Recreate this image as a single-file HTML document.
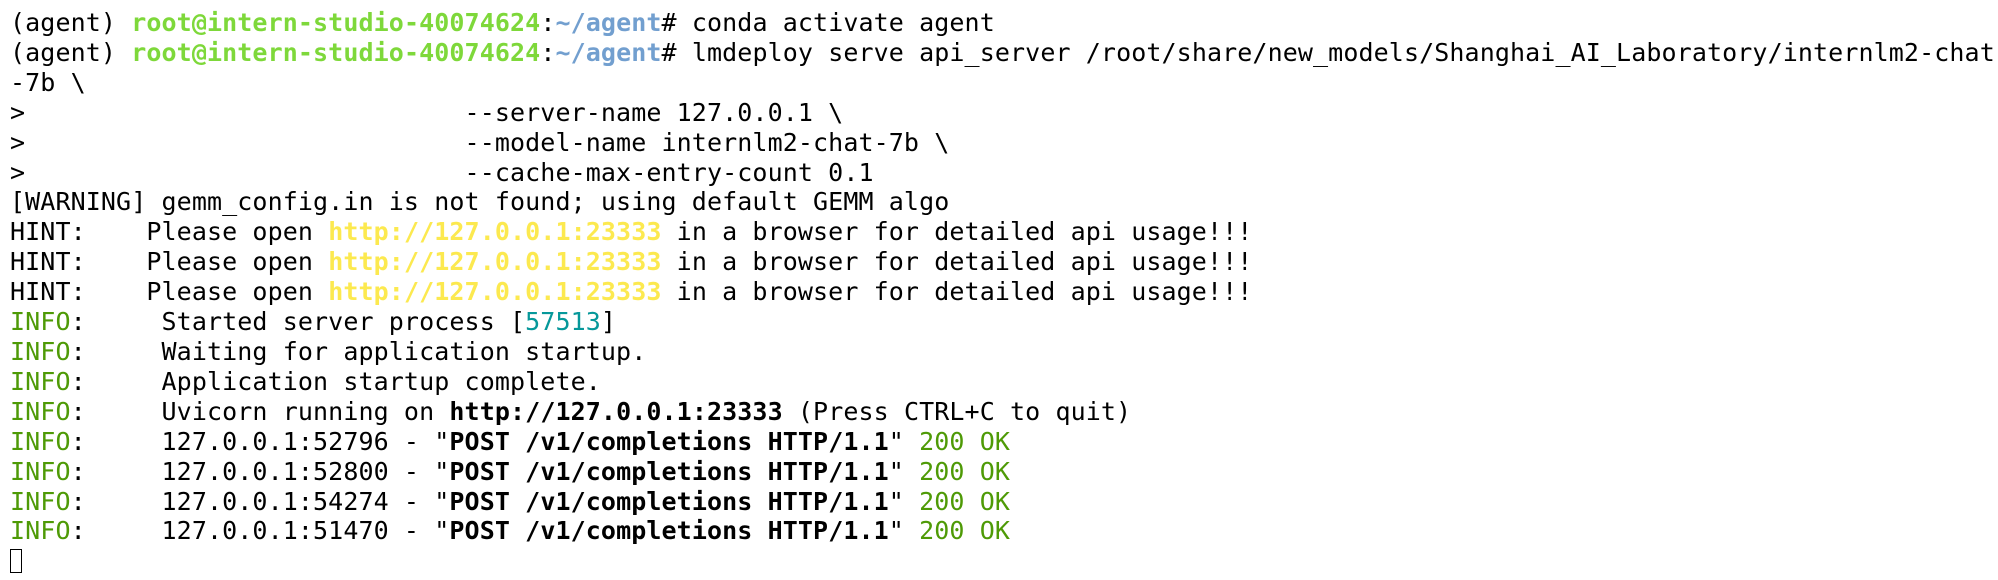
<!DOCTYPE html>
<html><head><meta charset="utf-8"><style>
html,body{margin:0;padding:0;background:#fff;width:1998px;height:580px;overflow:hidden}
pre{position:absolute;left:10px;top:8px;margin:0;font-family:"DejaVu Sans Mono","Liberation Mono",monospace;font-size:25px;line-height:29.9px;color:#000;letter-spacing:0.1px}
.g{color:#7ed83a;font-weight:bold}.b{color:#729fcf;font-weight:bold}.y{color:#fce94f;font-weight:bold}.c{color:#06989a}.i{color:#4e9a06}
b{font-weight:bold}
.cur{display:inline-block;width:12px;height:24px;border:1.5px solid #000;vertical-align:-4px;box-sizing:border-box}
</style></head><body><pre>(agent) <span class="g">root@intern-studio-40074624</span>:<span class="b">~/agent</span># conda activate agent
(agent) <span class="g">root@intern-studio-40074624</span>:<span class="b">~/agent</span># lmdeploy serve api_server /root/share/new_models/Shanghai_AI_Laboratory/internlm2-chat
-7b \
&gt;                             --server-name 127.0.0.1 \
&gt;                             --model-name internlm2-chat-7b \
&gt;                             --cache-max-entry-count 0.1
[WARNING] gemm_config.in is not found; using default GEMM algo
HINT:    Please open <span class="y">http://127.0.0.1:23333</span> in a browser for detailed api usage!!!
HINT:    Please open <span class="y">http://127.0.0.1:23333</span> in a browser for detailed api usage!!!
HINT:    Please open <span class="y">http://127.0.0.1:23333</span> in a browser for detailed api usage!!!
<span class="i">INFO</span>:     Started server process [<span class="c">57513</span>]
<span class="i">INFO</span>:     Waiting for application startup.
<span class="i">INFO</span>:     Application startup complete.
<span class="i">INFO</span>:     Uvicorn running on <b>http://127.0.0.1:23333</b> (Press CTRL+C to quit)
<span class="i">INFO</span>:     127.0.0.1:52796 - "<b>POST /v1/completions HTTP/1.1</b>" <span class="i">200 OK</span>
<span class="i">INFO</span>:     127.0.0.1:52800 - "<b>POST /v1/completions HTTP/1.1</b>" <span class="i">200 OK</span>
<span class="i">INFO</span>:     127.0.0.1:54274 - "<b>POST /v1/completions HTTP/1.1</b>" <span class="i">200 OK</span>
<span class="i">INFO</span>:     127.0.0.1:51470 - "<b>POST /v1/completions HTTP/1.1</b>" <span class="i">200 OK</span>
<span class="cur"></span></pre></body></html>
